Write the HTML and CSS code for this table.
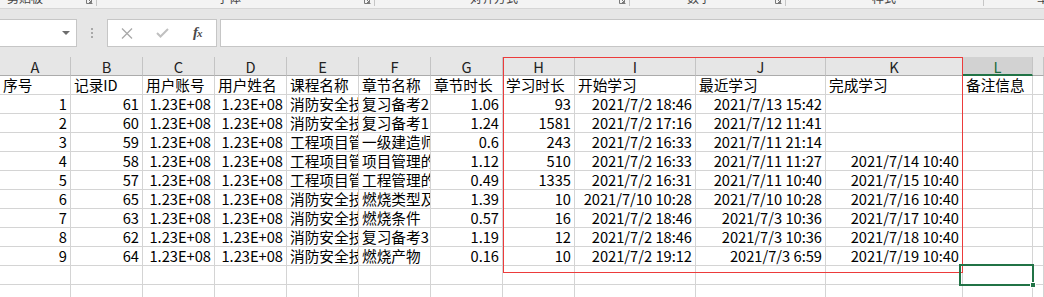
FILE: index.html
```html
<!DOCTYPE html>
<html lang="zh-CN">
<head>
<meta charset="utf-8">
<title>Sheet</title>
<link rel="stylesheet" href="styles.css">
</head>
<body>
<div class="ribbon">
  <div class="rgroup g1"><span class="rlabel">剪贴板</span><span class="launch"><svg width="7" height="7" viewBox="0 0 7 7"><path d="M0.5 0.5V6.5H6.5" fill="none" stroke="#7a7a7a"/><path d="M2 2L5.5 5.5M5.5 3V5.5H3" fill="none" stroke="#7a7a7a"/></svg></span></div>
  <div class="rgroup g2"><span class="rlabel">字体</span><span class="launch"><svg width="7" height="7" viewBox="0 0 7 7"><path d="M0.5 0.5V6.5H6.5" fill="none" stroke="#7a7a7a"/><path d="M2 2L5.5 5.5M5.5 3V5.5H3" fill="none" stroke="#7a7a7a"/></svg></span></div>
  <div class="rgroup g3"><span class="rlabel">对齐方式</span><span class="launch"><svg width="7" height="7" viewBox="0 0 7 7"><path d="M0.5 0.5V6.5H6.5" fill="none" stroke="#7a7a7a"/><path d="M2 2L5.5 5.5M5.5 3V5.5H3" fill="none" stroke="#7a7a7a"/></svg></span></div>
  <div class="rgroup g4"><span class="rlabel">数字</span><span class="launch"><svg width="7" height="7" viewBox="0 0 7 7"><path d="M0.5 0.5V6.5H6.5" fill="none" stroke="#7a7a7a"/><path d="M2 2L5.5 5.5M5.5 3V5.5H3" fill="none" stroke="#7a7a7a"/></svg></span></div>
  <div class="rgroup g5"><span class="rlabel">样式</span></div>
  <div class="rgroup g6"><span class="rlabel">单元格</span></div>
</div>

<div class="fbar">
  <div class="namebox"><span class="ddarrow"></span></div>
  <div class="dots"><i></i><i></i><i></i></div>
  <div class="fbtns">
    <svg class="ico-x" width="12" height="11" viewBox="0 0 12 11"><path d="M1 0.5L11 10.5M11 0.5L1 10.5" stroke="#a9a9a9" stroke-width="1.3" fill="none"/></svg>
    <svg class="ico-ok" width="13" height="10" viewBox="0 0 13 10"><path d="M1 5L4.5 8.5L12 1" stroke="#c0c0c0" stroke-width="2" fill="none"/></svg>
    <span class="fx">f<sub>x</sub></span>
  </div>
  <div class="finput"></div>
</div>

<div class="sheet">
  <div class="ch">A</div><div class="ch">B</div><div class="ch">C</div><div class="ch">D</div><div class="ch">E</div><div class="ch">F</div><div class="ch">G</div><div class="ch">H</div><div class="ch">I</div><div class="ch">J</div><div class="ch">K</div><div class="ch sel">L</div><div class="ch"></div>

  <div class="c">序号</div><div class="c">记录ID</div><div class="c">用户账号</div><div class="c">用户姓名</div><div class="c">课程名称</div><div class="c">章节名称</div><div class="c">章节时长</div><div class="c">学习时长</div><div class="c">开始学习</div><div class="c">最近学习</div><div class="c">完成学习</div><div class="c">备注信息</div><div class="c"></div>

  <div class="c n">1</div><div class="c n">61</div><div class="c n">1.23E+08</div><div class="c n">1.23E+08</div><div class="c">消防安全技术实务</div><div class="c">复习备考2</div><div class="c n">1.06</div><div class="c n">93</div><div class="c n">2021/7/2 18:46</div><div class="c n">2021/7/13 15:42</div><div class="c"></div><div class="c"></div><div class="c"></div>

  <div class="c n">2</div><div class="c n">60</div><div class="c n">1.23E+08</div><div class="c n">1.23E+08</div><div class="c">消防安全技术实务</div><div class="c">复习备考1</div><div class="c n">1.24</div><div class="c n">1581</div><div class="c n">2021/7/2 17:16</div><div class="c n">2021/7/12 11:41</div><div class="c"></div><div class="c"></div><div class="c"></div>

  <div class="c n">3</div><div class="c n">59</div><div class="c n">1.23E+08</div><div class="c n">1.23E+08</div><div class="c">工程项目管理</div><div class="c">一级建造师考试</div><div class="c n">0.6</div><div class="c n">243</div><div class="c n">2021/7/2 16:33</div><div class="c n">2021/7/11 21:14</div><div class="c"></div><div class="c"></div><div class="c"></div>

  <div class="c n">4</div><div class="c n">58</div><div class="c n">1.23E+08</div><div class="c n">1.23E+08</div><div class="c">工程项目管理</div><div class="c">项目管理的概念</div><div class="c n">1.12</div><div class="c n">510</div><div class="c n">2021/7/2 16:33</div><div class="c n">2021/7/11 11:27</div><div class="c n">2021/7/14 10:40</div><div class="c"></div><div class="c"></div>

  <div class="c n">5</div><div class="c n">57</div><div class="c n">1.23E+08</div><div class="c n">1.23E+08</div><div class="c">工程项目管理</div><div class="c">工程管理的内涵</div><div class="c n">0.49</div><div class="c n">1335</div><div class="c n">2021/7/2 16:31</div><div class="c n">2021/7/11 10:40</div><div class="c n">2021/7/15 10:40</div><div class="c"></div><div class="c"></div>

  <div class="c n">6</div><div class="c n">65</div><div class="c n">1.23E+08</div><div class="c n">1.23E+08</div><div class="c">消防安全技术实务</div><div class="c">燃烧类型及特点</div><div class="c n">1.39</div><div class="c n">10</div><div class="c n">2021/7/10 10:28</div><div class="c n">2021/7/10 10:28</div><div class="c n">2021/7/16 10:40</div><div class="c"></div><div class="c"></div>

  <div class="c n">7</div><div class="c n">63</div><div class="c n">1.23E+08</div><div class="c n">1.23E+08</div><div class="c">消防安全技术实务</div><div class="c">燃烧条件</div><div class="c n">0.57</div><div class="c n">16</div><div class="c n">2021/7/2 18:46</div><div class="c n">2021/7/3 10:36</div><div class="c n">2021/7/17 10:40</div><div class="c"></div><div class="c"></div>

  <div class="c n">8</div><div class="c n">62</div><div class="c n">1.23E+08</div><div class="c n">1.23E+08</div><div class="c">消防安全技术实务</div><div class="c">复习备考3</div><div class="c n">1.19</div><div class="c n">12</div><div class="c n">2021/7/2 18:46</div><div class="c n">2021/7/3 10:36</div><div class="c n">2021/7/18 10:40</div><div class="c"></div><div class="c"></div>

  <div class="c n">9</div><div class="c n">64</div><div class="c n">1.23E+08</div><div class="c n">1.23E+08</div><div class="c">消防安全技术实务</div><div class="c">燃烧产物</div><div class="c n">0.16</div><div class="c n">10</div><div class="c n">2021/7/2 19:12</div><div class="c n">2021/7/3 6:59</div><div class="c n">2021/7/19 10:40</div><div class="c"></div><div class="c"></div>

  <div class="c"></div><div class="c"></div><div class="c"></div><div class="c"></div><div class="c"></div><div class="c"></div><div class="c"></div><div class="c"></div><div class="c"></div><div class="c"></div><div class="c"></div><div class="c"></div><div class="c"></div>
  <div class="c"></div><div class="c"></div><div class="c"></div><div class="c"></div><div class="c"></div><div class="c"></div><div class="c"></div><div class="c"></div><div class="c"></div><div class="c"></div><div class="c"></div><div class="c"></div><div class="c"></div>

  <div class="redbox"></div>
  <div class="selbox"><span class="handle"></span></div>
</div>
</body>
</html>
```

FILE: styles.css
```css
* { box-sizing: border-box; margin: 0; padding: 0; }
html, body { width: 1044px; height: 297px; overflow: hidden; }
body {
  background: #ffffff;
  font-family: "Noto Sans CJK SC", "Noto Sans", sans-serif;
  color: #000;
}

/* ribbon bottom strip */
.ribbon {
  height: 9px;
  background: #f3f3f3;
  border-bottom: 1px solid #d5d5d5;
  display: flex;
  overflow: hidden;
}
.rgroup {
  display: flex;
  align-items: flex-start;
  height: 6px;
  border-right: 1px solid #c6c6c6;
  flex: none;
}
.g1 { width: 97px; padding-left: 7px; }
.g2 { width: 278px; padding-left: 120px; }
.g3 { width: 255px; padding-left: 95px; }
.g4 { width: 156px; padding-left: 57px; }
.g5 { width: 198px; padding-left: 86px; }
.g6 { flex: 1; padding-left: 53px; border-right: none; }
.rlabel {
  font-size: 12px;
  line-height: 12px;
  margin-top: -8px;
  color: #444;
  white-space: nowrap;
}
.launch {
  margin-left: auto;
  margin-right: 3px;
  margin-top: -3px;
  display: block;
  height: 7px;
}
.launch svg { display: block; }

/* formula bar */
.fbar {
  height: 48px;
  background: #e6e6e6;
  padding-top: 10px;
  display: flex;
  align-items: flex-start;
}
.namebox {
  width: 77px;
  height: 28px;
  background: #fff;
  border: 1px solid #c6c6c6;
  border-left: none;
  display: flex;
  align-items: center;
  justify-content: flex-end;
  padding-right: 6px;
}
.ddarrow {
  width: 0;
  height: 0;
  border-left: 4px solid transparent;
  border-right: 4px solid transparent;
  border-top: 4px solid #6d6d6d;
}
.dots {
  width: 30px;
  height: 28px;
  display: flex;
  flex-direction: column;
  align-items: center;
  justify-content: center;
  gap: 2px;
}
.dots i {
  display: block;
  width: 2px;
  height: 2px;
  background: #a8a8a8;
}
.fbtns {
  width: 110px;
  height: 28px;
  background: #fff;
  border: 1px solid #c6c6c6;
  display: flex;
  align-items: center;
  padding-left: 13px;
}
.ico-x { display: block; }
.ico-ok { display: block; margin-left: 23px; }
.fx {
  margin-left: 24px;
  font-family: "Liberation Serif", serif;
  font-style: italic;
  font-weight: bold;
  font-size: 15px;
  color: #4a4a4a;
  line-height: 1;
  margin-top: -2px;
}
.fx sub {
  font-size: 11px;
  vertical-align: 0;
  margin-left: -1px;
}
.finput {
  flex: 1;
  height: 28px;
  margin-left: 3px;
  background: #fff;
  border: 1px solid #c6c6c6;
  border-right: none;
}

/* sheet grid */
.sheet {
  position: relative;
  display: grid;
  grid-template-columns: 71px 72px 72px 72px 72px 72px 72px 72px 121px 130px 137px 70px 1fr;
  grid-auto-rows: 19px;
  font-size: 14.67px;
}
.ch {
  background: #e6e6e6;
  border-right: 1px solid #c4c4c4;
  border-bottom: 1px solid #ababab;
  text-align: center;
  line-height: 18px;
  padding-top: 1px;
  color: #222;
}
.ch.sel {
  background: #d2d2d2;
  border-bottom: 2px solid #217346;
  color: #1d6b3f;
}
.c {
  border-right: 1px solid #d4d4d4;
  border-bottom: 1px solid #d4d4d4;
  line-height: 18px;
  padding: 0 3px;
  white-space: nowrap;
  overflow: hidden;
}
.c.n { text-align: right; }

.redbox {
  position: absolute;
  left: 503px;
  top: 0;
  width: 460px;
  height: 216px;
  border: 1px solid #ec3b3b;
  pointer-events: none;
}
.selbox {
  position: absolute;
  left: 959px;
  top: 207px;
  width: 75px;
  height: 22px;
  border: 2px solid #217346;
}
.handle {
  position: absolute;
  right: -4px;
  bottom: -4px;
  width: 6px;
  height: 6px;
  background: #217346;
  border: 1px solid #fff;
}
```
